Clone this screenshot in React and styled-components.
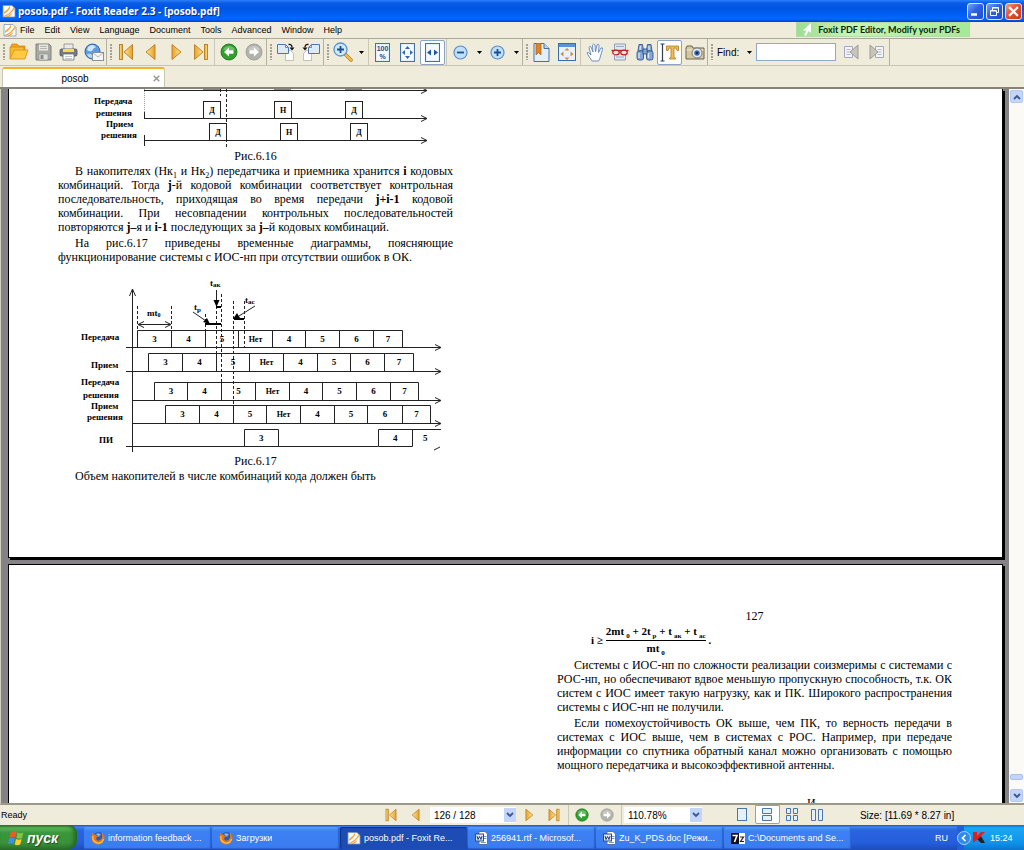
import React from 'react'
import styled, { createGlobalStyle } from 'styled-components';

const GlobalStyle = createGlobalStyle`
  * {
    box-sizing: border-box;
  }

  body {
    margin: 0;
    overflow: hidden;
    font-family: 'Liberation Sans', Arial, sans-serif;
    font-size: 10px;
    color: #000;
  }

  button, input, select {
    margin: 0;
    padding: 0;
    border: 0;
    background: none;
    font: inherit;
    color: inherit;
  }

  svg {
    display: block;
    flex: none;
  }
`

const Window = styled.div`
  display: flex;
  flex-direction: column;
  height: 100vh;
  background: #f0ecdc;
`

/* title bar */

const TitleBar = styled.header`
  display: flex;
  flex: none;
  align-items: center;
  gap: 2px;
  height: 22px;
  padding: 0 2px;
  background: linear-gradient(#2a80f8 0, #0a5ce6 3px, #0055e0 8px, #0062fa 16px, #0068ff 19px, #0040c4 22px);
`

const Title = styled.h1`
  flex: 1;
  margin: 0;
  font-family: 'Open Sans', sans-serif;
  font-size: 10px;
  font-weight: 700;
  color: #fff;
  text-shadow: 1px 1px 0 #0a2f8c;
`

const CaptionButton = styled.button`
  display: flex;
  align-items: center;
  justify-content: center;
  width: 17px;
  height: 17px;
  border: 1px solid #dce6fb;
  border-radius: 3px;
  background: ${props => props.$close
    ? 'linear-gradient(135deg, #f0a088, #e2502c 45%, #c83a14)'
    : 'linear-gradient(135deg, #7ba2f5, #2f62e0 45%, #1c4ccc)'};
`

/* menu */

const MenuBar = styled.nav`
  display: flex;
  flex: none;
  align-items: center;
  height: 16px;
  padding: 0 54px 1px 3px;
  font-size: 9px;
`

const MenuItem = styled.button`
  margin-right: 10px;
`

const DocIconBox = styled.span`
  margin-right: 3px;
`

const Promo = styled.a`
  display: flex;
  align-items: center;
  gap: 6px;
  height: 15px;
  margin-left: auto;
  padding: 0 9px 0 6px;
  border: 1px solid #b2dca6;
  background: linear-gradient(90deg, #9fdc93, #c4f4b6 30%, #a4ea98);
  font-family: Lato, sans-serif;
  font-size: 9px;
  font-weight: 700;
  color: #10240c;
  text-decoration: none;
  white-space: nowrap;
`

/* toolbar */

const Toolbar = styled.div`
  display: flex;
  flex: none;
  height: 28px;
  border-top: 1px solid #aca899;
  border-bottom: 1px solid #c8c5b4;
`

const Group = styled.div`
  display: flex;
  align-items: center;
  border-right: 1px solid #b4b1a2;
`

const Grip = styled.i`
  width: 2px;
  height: 16px;
  margin: 0 1px 0 3px;
  background: repeating-linear-gradient(#a5a294 0 2px, transparent 2px 3px);
`

const Sep = styled.i`
  width: 1px;
  height: 100%;
  margin: 0 1px;
  background: #cbc8b8;
`

const ToolButton = styled.button`
  display: flex;
  align-items: center;
  justify-content: center;
  width: 25px;
  height: 25px;
  border: 1px solid ${props => props.$active ? '#8ba3c4' : 'transparent'};
  border-radius: 2px;
  background: ${props => props.$active ? '#fff' : 'none'};
`

const DropButton = styled.button`
  display: flex;
  align-items: center;
  justify-content: center;
  width: 12px;
  height: 25px;
`

const FindLabel = styled.label`
  margin: 0 4px 0 3px;
`

const FindInput = styled.input`
  width: 80px;
  height: 18px;
  margin: 0 3px 0 1px;
  border: 1px solid #8fa9cc;
  background: #fff;
`

/* tabs */

const TabBar = styled.div`
  display: flex;
  flex: none;
  align-items: flex-end;
  height: 23px;
  padding-left: 2px;
  border-bottom: 2px solid #85827a;
`

const Tab = styled.div`
  display: flex;
  align-items: center;
  width: 163px;
  height: 20px;
  padding: 0 4px;
  border: 1px solid #c9c6b6;
  border-top: 2px solid #f5b227;
  border-bottom: 0;
  border-radius: 3px 3px 0 0;
  background: #fff;
`

const TabName = styled.button`
  flex: 1;
  padding-right: 10px;
`

/* viewer */

const Viewer = styled.main`
  display: flex;
  flex: 1;
  min-height: 0;
  border-bottom: 2px solid #9c998c;
  border-left: 1px solid #d4d0c0;
`

const Pages = styled.div`
  flex: 1;
  padding: 0 6px 0 7px;
  overflow: hidden;
  background: #848284;
`

const Page = styled.article`
  display: grid;
  grid-template-columns: 1fr 1fr;
  gap: 104px;
  padding: ${props => props.$continued ? '0 50px 72px 49px' : '44px 50px 72px 49px'};
  margin-bottom: 6px;
  border: 1px solid #000;
  border-top-width: ${props => props.$continued ? '0' : '1px'};
  box-shadow: 2px 2px 0 #000;
  background: #fff;
  font-family: 'Liberation Serif', 'Times New Roman', serif;
  font-size: 12px;
  line-height: 14px;
`

const Column = styled.section`
  min-width: 0;
`

const Paragraph = styled.p`
  margin: 0 0 2px;
  text-indent: 17px;
  text-align: justify;

  sub {
    font-size: 8px;
    line-height: 0;
  }
`

const Centered = styled.p`
  margin: 0 0 1px;
  text-align: center;
`

const NextHeading = styled.p`
  margin: 24px 0 0;
  padding-left: 250px;
`

const Figure = styled.svg`
  width: 100%;
  max-width: 395px;
  font-family: 'Liberation Serif', 'Times New Roman', serif;
  font-size: 9px;
  font-weight: 700;
`

const Formula = styled.div`
  display: flex;
  align-items: center;
  gap: 3px;
  height: 34px;
  padding: 0 0 3px 34px;
  font-size: 11px;
  font-weight: 700;

  sub {
    margin-left: 2px;
    font-size: 7px;
    line-height: 0;
  }
`

const Fraction = styled.div`
  text-align: center;
`

const Numerator = styled.div`
  height: 17px;
  border-bottom: 1px solid #000;
`

const ScrollBar = styled.div`
  display: flex;
  flex-direction: column;
  justify-content: space-between;
  align-items: center;
  width: 15px;
  padding: 1px 0;
  background: #fbfaf6;
`

const ScrollButton = styled.button`
  display: flex;
  align-items: center;
  justify-content: center;
  width: 13px;
  height: 13px;
  border: 1px solid #b4c8f0;
  border-radius: 2px;
  background: #c4d5fb;
`

const Thumb = styled.div`
  width: 13px;
  height: 6px;
  margin: auto 0 9px;
  border: 1px solid #a8bfee;
  border-radius: 2px;
  background: #c4d5fb;
`

/* status bar */

const StatusBar = styled.footer`
  display: flex;
  flex: none;
  align-items: center;
  height: 20px;
`

const Ready = styled.span`
  width: 37%;
  padding-left: 1px;
  font-size: 9px;
`

const SelectBox = styled.span`
  display: flex;
  align-items: center;
  width: ${props => props.$wide ? '86px' : '78px'};
  height: 16px;
  margin: 0 1px;
  background: #fff;

  select {
    flex: 1;
    min-width: 0;
    padding-left: 4px;
    appearance: none;
  }
`

const SelectArrow = styled.span`
  display: flex;
  align-items: center;
  justify-content: center;
  width: 12px;
  height: 14px;
  background: #c4d5fb;
`

const LayoutButtons = styled.div`
  display: flex;
  height: 100%;
  margin: 0 30px 0 27px;
`

const LayoutButton = styled(ToolButton)`
  height: 19px;
  border-radius: 0 0 2px 2px;
`

/* taskbar */

const Taskbar = styled.div`
  display: flex;
  flex: none;
  height: 25px;
  background: linear-gradient(#1f4fc0 0, #3f83f0 2px, #2a64e0 5px, #245edb 18px, #1d4cb8);
  font-size: 9px;
  color: #fff;
`

const StartButton = styled.button`
  display: flex;
  flex: none;
  align-items: center;
  gap: 3px;
  width: 77px;
  margin-right: 7px;
  padding-left: 8px;
  border-radius: 0 8px 10px 0;
  background: linear-gradient(#2c7a2c 0, #5cb45a 3px, #3a963a 8px, #3a923a 18px, #2a702a);
  box-shadow: inset -3px 0 4px #246424;
  font-size: 14px;
  font-style: italic;
  font-weight: 700;
  text-shadow: 1px 1px 1px #1b4a1b;
`

const Task = styled.button`
  display: flex;
  flex: 0 1 127px;
  align-items: center;
  gap: 3px;
  min-width: 0;
  height: 22px;
  margin: 2px 1px 0 0;
  padding: 0 7px;
  border-radius: 2px;
  background: ${props => props.$active ? '#1c4cb4' : 'linear-gradient(#5c9cfc, #3c81f3 4px, #3a7cf0)'};
  box-shadow: ${props => props.$active ? 'inset 1px 1px 1px #0f3484' : 'inset -1px -1px 1px #2a62d4'};

  span {
    overflow: hidden;
    white-space: nowrap;
  }
`

const Language = styled.span`
  margin: auto 9px auto auto;
`

const Tray = styled.div`
  display: flex;
  align-items: center;
  gap: 2px;
  width: 67px;
  background: linear-gradient(90deg, #245edb 7px, transparent 7px), linear-gradient(#0c6cd0 0, #18a8f4 3px, #0f92ea 18px, #0c74cc);

  time {
    margin-left: 3px;
  }
`

/* icons */

const FoxitIcon = () => (
  <svg width="14" height="14" viewBox="0 0 14 14">
    <path d="M1 1.500h9l3 3v8.500H1z" fill="#f8fbff" stroke="#7a96bc" strokeWidth=".8" />
    <path d="M2 8Q6 6 8 1.500Q9 6 2 10z" fill="#f5a83c" />
    <path d="M13 3Q12 10 4 13Q10 13.500 13 3z" fill="#f08a16" />
    <path d="M12 4Q9 10 2 12.500" stroke="#f5a23c" strokeWidth="1.300" fill="none" />
  </svg>
)

const FolderIcon = () => (
  <svg width="20" height="18" viewBox="0 0 20 18">
    <path d="M2 3l1-2h5l2 2h6v4H2z" fill="#f2a81c" stroke="#cf8010" strokeWidth=".7" />
    <path d="M1 16V4h14v4" fill="#f8bc34" stroke="#cf8010" strokeWidth=".7" />
    <path d="M1 16L5 7h14l-3 9z" fill="#ffca42" stroke="#d98c14" strokeWidth=".8" />
  </svg>
)

const SaveIcon = () => (
  <svg width="17" height="18" viewBox="0 0 17 18">
    <path d="M1 1h13l2 2v14H1z" fill="#a9a9a5" stroke="#80807c" />
    <rect x="4" y="1.5" width="9" height="6" fill="#e8e8e4" />
    <path d="M5 3.5h7M5 5.5h7" stroke="#b4b4b0" />
    <rect x="4" y="11" width="9" height="6" fill="#dededa" stroke="#8a8a86" strokeWidth=".6" />
    <rect x="5.5" y="12" width="3" height="4" fill="#8c8c88" />
  </svg>
)

const PrintIcon = () => (
  <svg width="19" height="18" viewBox="0 0 19 18">
    <path d="M5 1h9v6H5z" fill="#e8eaee" stroke="#8a8a80" strokeWidth=".8" />
    <rect x="1" y="6" width="17" height="7" rx="1.5" fill="#777b80" stroke="#4c5054" strokeWidth=".8" />
    <rect x="4" y="6" width="11" height="3" fill="#f2e23c" />
    <path d="M4 11h11v6H4z" fill="#fafafa" stroke="#6a6e72" strokeWidth=".8" />
    <path d="M6 13.5h7M6 15.5h7" stroke="#b8bcc0" strokeWidth=".8" />
  </svg>
)

const GlobeMailIcon = () => (
  <svg width="20" height="18" viewBox="0 0 20 18">
    <circle cx="8.5" cy="8.5" r="7.5" fill="#5f9be0" stroke="#2c62ac" />
    <path d="M4 4q4-4 8 0q-3 1-4 4q-3 1-5-1z" fill="#cfe6fb" />
    <path d="M3 11q3-1 5 1v3q-4 0-5-4z" fill="#b7d7f6" />
    <rect x="8.5" y="9.5" width="11" height="8" fill="#f6f6f2" stroke="#8a8f98" />
    <path d="M9 10l5 4 5-4" fill="none" stroke="#a0a4ac" strokeWidth=".8" />
  </svg>
)

const NavIcon = ({ kind, size = 18 }) => {
  const back = kind === 'first' || kind === 'prev'
  const bar = kind === 'first' || kind === 'last'
  return (
    <svg width={size} height={size} viewBox="0 0 18 18">
      <defs>
        <linearGradient id={`gold-${kind}`} x1="0" x2="1">
          <stop offset="0" stopColor="#ffe490" />
          <stop offset="1" stopColor="#e8a02c" />
        </linearGradient>
      </defs>
      <g transform={back ? undefined : 'matrix(-1 0 0 1 18 0)'} fill={`url(#gold-${kind})`} stroke="#b87c1c" strokeWidth=".9">
        {bar && <rect x="2.5" y="1.5" width="3" height="15" />}
        <path d={bar ? 'M7 9L15.500 1.500V16.500z' : 'M4 9L13 1.500V16.500z'} />
      </g>
    </svg>
  )
}

const RoundArrow = ({ forward, size = 18 }) => (
  <svg width={size} height={size} viewBox="0 0 18 18">
    <circle cx="9" cy="9" r="8" fill={forward ? '#b3b3ad' : '#2ea12c'} stroke={forward ? '#98988f' : '#1a6a1c'} strokeWidth=".8" />
    <path d="M3 7a6.500 6.500 0 0 1 12 0z" fill="#fff" opacity=".3" />
    <path d="M4 9L9 4.500V7.300H13.500V10.700H9V13.500z" fill="#fff" transform={forward ? 'matrix(-1 0 0 1 18 0)' : undefined} />
  </svg>
)

const RotateIcon = ({ left }) => (
  <svg width="18" height="18" viewBox="0 0 18 18">
    <g transform={left ? 'matrix(-1 0 0 1 18 0)' : undefined}>
      <path d="M8.500 7.500h5l3 3v7h-8z" fill="#fdfdfa" stroke="#b4b4ac" strokeWidth=".8" />
      <path d="M.5 1.500h8l3 3v6H.5z" fill="#dceafa" stroke="#4a78ae" />
      <path d="M8.500 1.500v3h3" fill="none" stroke="#4a78ae" strokeWidth=".8" />
      <path d="M11.500 1.500q3.500-.5 3.500 3" fill="none" stroke="#111" strokeWidth="1.300" />
      <path d="M12.500 4.500h5L15 7.500z" fill="#111" />
    </g>
  </svg>
)

const MagnifierIcon = () => (
  <svg width="20" height="20" viewBox="0 0 20 20">
    <path d="M12 12l6 6" stroke="#b07a20" strokeWidth="3.500" strokeLinecap="round" />
    <path d="M12 12l6 6" stroke="#f4bc50" strokeWidth="2.300" strokeLinecap="round" />
    <circle cx="7.500" cy="7.500" r="6.500" fill="#cfe8fc" stroke="#5a94cc" strokeWidth="1.300" />
    <path d="M4 7.500h7M7.500 4v7" stroke="#1c4e94" strokeWidth="1.800" />
  </svg>
)

const SheetIcon = ({ kind }) => (
  <svg width="17" height="19" viewBox="0 0 17 19">
    <rect x="1.500" y=".5" width="14" height="18" fill="#e2eefb" stroke="#4472a8" />
    <rect x="3" y="2" width="11" height="15" fill="#f4f9ff" />
    {kind === 'actual' && (
      <g fill="#23497c" fontFamily="Liberation Sans, sans-serif" fontSize="7" fontWeight="700" textAnchor="middle">
        <text x="8.500" y="8">100</text>
        <text x="8.500" y="16">%</text>
      </g>
    )}
    {kind === 'page' && (
      <path d="M8.500 3l2.500 3h-5zM8.500 16l2.500-3h-5zM3 9.500l3-2.500v5zM14 9.500l-3-2.500v5z" fill="#3269ac" />
    )}
    {kind === 'width' && <path d="M3 9.500l4-3v6zM14 9.500l-4-3v6z" fill="#1d55a0" />}
  </svg>
)

const ZoomIcon = ({ plus }) => (
  <svg width="15" height="15" viewBox="0 0 15 15">
    <circle cx="7.500" cy="7.500" r="6.500" fill="#bfe0fa" stroke="#5b8fc6" strokeWidth="1.200" />
    <path d={plus ? 'M4 7.500h7M7.500 4v7' : 'M4 7.500h7'} stroke="#1c4e94" strokeWidth="1.800" />
  </svg>
)

const BookmarkIcon = () => (
  <svg width="17" height="19" viewBox="0 0 17 19">
    <path d="M1 .5h10l5 5v13H1z" fill="#e4effc" stroke="#4472a8" />
    <path d="M11 .5v5h5" fill="#b9d2f0" stroke="#4472a8" />
    <path d="M3 0h5v12L5.500 9.500 3 12z" fill="#e08420" stroke="#a85a10" strokeWidth=".7" />
  </svg>
)

const FullScreenIcon = () => (
  <svg width="18" height="18" viewBox="0 0 18 18">
    <rect x=".5" y=".5" width="17" height="17" fill="#e8f1fc" stroke="#3a6cac" />
    <path d="M1 2.500h16" stroke="#5d93d6" strokeWidth="3" />
    <path d="M9 5l2.500 2.500h-5zM9 17l2.500-2.500h-5zM2.500 11l3-2.500v5zM15.500 11l-3-2.500v5z" fill="#cc9030" />
  </svg>
)

const HandIcon = () => (
  <svg width="18" height="19" viewBox="0 0 18 19">
    <path d="M6 18L1.500 11Q.5 9 2.500 9.500L5 12L3 4.500Q3.500 2.500 5 4L7 9L6.500 2Q7.500 0 9 2L9.500 9L11 2Q12.500 0 13 2.500L12.500 9.500L15 5Q17 4 16.500 6.500L14.500 13Q14 16 12.500 18z" fill="#fff" stroke="#5f84b8" strokeWidth=".9" strokeLinejoin="round" />
  </svg>
)

const PrintPreviewIcon = () => (
  <svg width="18" height="18" viewBox="0 0 18 18">
    <path d="M3.500 1h11v16h-11z" fill="#dfe8f5" stroke="#8595ae" strokeWidth=".9" />
    <path d="M5 3.500h8M5 14h8" stroke="#9aa8bc" />
    <path d="M.5 7.500h17" stroke="#b82020" strokeWidth="1.300" />
    <ellipse cx="5" cy="9.500" rx="3.300" ry="2.300" fill="#fbe6e6" stroke="#b82020" strokeWidth="1.200" />
    <ellipse cx="13" cy="9.500" rx="3.300" ry="2.300" fill="#fbe6e6" stroke="#b82020" strokeWidth="1.200" />
  </svg>
)

const BinocularsIcon = () => (
  <svg width="18" height="18" viewBox="0 0 18 18">
    <g fill="#86a8d8" stroke="#34588c" strokeWidth=".9">
      <path d="M3 1.500h3.500l1 6.500H2z" />
      <path d="M11.500 1.500H15L16 8h-5.500z" />
      <rect x="1" y="8" width="6.500" height="9" rx="2" />
      <rect x="10.500" y="8" width="6.500" height="9" rx="2" />
      <rect x="7" y="6" width="4" height="5" />
    </g>
    <path d="M3 10v5M12.500 10v5M4.500 3l-.5 4M13 3v4" stroke="#d8e6f8" strokeWidth="1.300" />
  </svg>
)

const TextToolIcon = () => (
  <svg width="19" height="19" viewBox="0 0 19 19">
    <path d="M.5 1h4M.5 18h4M2.500 1v17" stroke="#2c3c54" strokeWidth="1.200" fill="none" />
    <path d="M6.500 3h12v4.500h-1.500L16 5h-2v9.500l1.500.5v1h-6v-1l1.500-.5V5H9L8 7.500H6.500z" fill="#f0bc58" stroke="#b07a1c" strokeWidth=".8" />
  </svg>
)

const CameraIcon = () => (
  <svg width="20" height="17" viewBox="0 0 20 17">
    <path d="M1 4l1-2h5l1 2h11v11H1z" fill="#d4c8a4" stroke="#6e6448" />
    <path d="M1.500 6h17" stroke="#f4ecd0" />
    <circle cx="12" cy="9" r="5" fill="#ececec" stroke="#77787c" />
    <circle cx="12" cy="9" r="2.800" fill="#3c6cb4" />
    <circle cx="12" cy="9" r="1.200" fill="#12284c" />
  </svg>
)

const FindPageIcon = ({ next }) => (
  <svg width="15" height="16" viewBox="0 0 15 16">
    <g transform={next ? 'matrix(-1 0 0 1 15 0)' : undefined}>
      <path d="M.5 2.500h8v11h-8z" fill="#f4f4f6" stroke="#a2a8c2" />
      <path d="M2.500 5.500h4M2.500 8h4M2.500 10.500h4" stroke="#b4b8cc" />
      <path d="M6 8L14 1v14z" fill="#c8c6bc" stroke="#96948c" strokeWidth=".9" />
    </g>
  </svg>
)

const DownTriangle = () => (
  <svg width="5" height="3" viewBox="0 0 5 3"><path d="M0 0h5L2.500 3z" fill="#000" /></svg>
)

const Chevron = ({ up }) => (
  <svg width="8" height="6" viewBox="0 0 8 6">
    <path d={up ? 'M1 5l3-3 3 3' : 'M1 1l3 3 3-3'} fill="none" stroke="#3d5590" strokeWidth="1.800" />
  </svg>
)

const LayoutIcon = ({ kind }) => (
  <svg width="12" height="13" viewBox="0 0 12 13" fill="#e6f0fb" stroke="#4a76aa">
    {kind === 'single' && <rect x="1.500" y=".5" width="9" height="12" />}
    {kind === 'continuous' && <path d="M1.500 .5h9v5h-9zM1.500 7.500h9v5h-9z" />}
    {kind === 'facing' && <path d="M.5 1.500h4v11h-4zM7.500 1.500h4v11h-4z" />}
    {kind === 'grid' && <path d="M.5 .5h4v5h-4zM7.500 .5h4v5h-4zM.5 7.500h4v5h-4zM7.500 7.500h4v5h-4z" />}
  </svg>
)

const CloseIcon = ({ color, size }) => (
  <svg width={size} height={size} viewBox="0 0 10 10">
    <path d="M1 1l8 8M9 1L1 9" stroke={color} strokeWidth="2" />
  </svg>
)

const FirefoxIcon = () => (
  <svg width="14" height="14" viewBox="0 0 14 14">
    <circle cx="7.500" cy="6.500" r="5.500" fill="#2f5cb0" />
    <path d="M5 3q3-2 5 1q-2 0-2 2z" fill="#8cbcf0" />
    <path d="M1 2Q3 4 4 3.500Q6 5 7 5.500Q5 6 5 8Q7 11 10 8.500Q12 6 10.500 1.500Q14 4 13.500 8Q12 13.500 7 13.500Q1 13 .5 7.500z" fill="#ee7418" />
    <path d="M2 5q-1 5 4 7q5 1 6.500-4" fill="none" stroke="#ffc244" strokeWidth="1.200" />
  </svg>
)

const WordIcon = () => (
  <svg width="13" height="14" viewBox="0 0 13 14">
    <path d="M4 .5h6l2.500 2.500v10.500H4z" fill="#fff" stroke="#5472a8" />
    <path d="M9 5.500h2.500M9 7.500h2.500M6 11.500h5" stroke="#7c98c8" />
    <rect x=".5" y="3" width="8" height="7" fill="#dfe8f8" stroke="#2a4a8c" />
    <path d="M2 5l1 3.500 1.500-3 1.500 3L7 5" fill="none" stroke="#1c3c84" />
  </svg>
)

const SevenZipIcon = () => (
  <svg width="14" height="11" viewBox="0 0 14 11">
    <rect width="14" height="11" fill="#fff" />
    <rect width="8" height="11" fill="#111" />
    <path d="M1.500 2.500H6L3.500 9" fill="none" stroke="#fff" strokeWidth="1.600" />
    <path d="M9 4h3.500L9.500 8.500H13" fill="none" stroke="#222" strokeWidth="1.200" />
  </svg>
)

const WindowsFlag = () => (
  <svg width="16" height="16" viewBox="0 0 16 16">
    <path d="M3 2q3-2 5.500 0L7 7.500Q4.500 6 1.500 7.500z" fill="#f05a28" />
    <path d="M9.500 2.500q3 1.500 6 0L14 8q-3 1.500-5.500 0z" fill="#86c440" />
    <path d="M1.200 8.500q3-1.500 5.500 0L5.200 14Q3 12.500 0 14z" fill="#3f8ff0" />
    <path d="M8 9q2.500 1.500 5.700 0l-1.500 5.500q-3 1.500-5.500 0z" fill="#fccb2c" />
  </svg>
)

const TrayArrow = () => (
  <svg width="14" height="14" viewBox="0 0 14 14">
    <circle cx="7" cy="7" r="6.500" fill="#2f8cec" stroke="#a4d2fa" />
    <path d="M8.500 4L5.500 7l3 3" fill="none" stroke="#fff" strokeWidth="1.700" />
  </svg>
)

const KasperskyIcon = () => (
  <svg width="12" height="13" viewBox="0 0 12 13">
    <path d="M4 8l4-3 4 7H8z" fill="#222" />
    <path d="M0 1h4v4l4-4h4L5 8l-5 4z" fill="#e41c1c" />
  </svg>
)

/* figures */

const Arrow = ({ x1, x2, y }) => (
  <path d={`M${x1} ${y}H${x2}M${x2 - 6} ${y - 3}L${x2} ${y}L${x2 - 6} ${y + 3}`} fill="none" />
)

const decisionRows = [
  { y: 118.5, xs: [203.5, 274.5, 345.5] },
  { y: 140.5, xs: [209.5, 280.5, 350.5] },
]

const decisions = ['Д', 'Н', 'Д']

const Figure616 = () => (
  <Figure viewBox="58 89 395 60">
    <g stroke="#222" fill="none">
      <path d="M144.500 89v23" stroke="#999" strokeDasharray="1 1" />
      <path d="M144.500 112v6M144.500 135v11" />
      <path d="M226.500 89v58" strokeDasharray="3 2" />
      <path d="M220.500 89v7" strokeDasharray="3 2" />
      <Arrow x1={144} x2={427} y={90.5} />
      <path d="M203 89.500h17M274 89.500h17M345 89.500h17" stroke="#888" />
      {decisionRows.map(row => (
        <g key={row.y}>
          <Arrow x1={144} x2={427} y={row.y} />
          {row.xs.map(x => <rect key={x} x={x} y={row.y - 17} width="17" height="17" fill="#fff" />)}
        </g>
      ))}
    </g>
    {decisionRows.map(row => row.xs.map((x, i) => (
      <text key={x} x={x + 8.5} y={row.y - 6} fontSize="8" textAnchor="middle">{decisions[i]}</text>
    )))}
    <text x="94" y="104">Передача</text>
    <text x="96" y="116">решения</text>
    <text x="106" y="127">Прием</text>
    <text x="101" y="138">решения</text>
  </Figure>
)

const timeline = [
  { top: 330.5, base: 347.5, start: 126, xs: [137.5, 171.5, 205.5, 238.5, 272.5, 305.5, 339.5, 373.5, 402.5] },
  { top: 353.5, base: 371.5, start: 126, xs: [148.5, 182.5, 216.5, 249.5, 283.5, 317.5, 350.5, 384.5, 413.5] },
  { top: 382.5, base: 400.5, start: 132, xs: [154.5, 187.5, 221.5, 255.5, 289.5, 322.5, 356.5, 390.5, 418.5] },
  { top: 405.5, base: 423.5, start: 132, xs: [165.5, 199.5, 233.5, 266.5, 300.5, 334.5, 367.5, 402.5, 430.5] },
]

const frames = ['3', '4', '5', 'Нет', '4', '5', '6', '7']

const Figure617 = () => (
  <Figure viewBox="58 266 395 188">
    <g stroke="#222" fill="none">
      <path d="M132.500 452V289M129.500 296L132.500 289L135.500 296" />
      {timeline.map(row => (
        <g key={row.base}>
          <Arrow x1={row.start} x2={441} y={row.base} />
          <path d={`M${row.xs[0]} ${row.top}H${row.xs[8]}` + row.xs.map(x => `M${x} ${row.top}V${row.base}`).join('')} />
        </g>
      ))}
      <path d="M126 446.500H378M244.500 446.500v-17h34v17M378.500 446.500v-17H441M378.500 446.500h34v-17M434 450L440 447" />
      <path d="M137.500 306v24M171.500 306v24M205.500 314v16M216.500 306v65M221.500 294v106M233.500 301v122M244.500 301v46" strokeDasharray="3 2" />
      <path d="M138 324.500H170M144 321.500L138 324.500L144 327.500M165 321.500L171 324.500L165 327.500" />
      <path d="M193 312L206 321M216.500 290V301M255 306L239 316" />
      <path d="M205 324H221M216 307H221M234 319H244" stroke="#000" strokeWidth="2" />
    </g>
    <path d="M210 324l-7-2 4-4zM216.500 307l-3-7h6zM233 319l4-6 3 5z" />
    <text x="147" y="316">mt<tspan fontSize="6" dy="1">0</tspan></text>
    <text x="194" y="310">t<tspan fontSize="7" dy="2">р</tspan></text>
    <text x="210" y="286">t<tspan fontSize="7" dy="1">ак</tspan></text>
    <text x="245" y="303">t<tspan fontSize="7" dy="1">ас</tspan></text>
    {timeline.map(row => frames.map((name, i) => (
      <text
        key={`${row.base}-${i}`}
        x={(row.xs[i] + row.xs[i + 1]) / 2}
        y={row.top + 11}
        fontSize={name === 'Нет' ? 8 : 9}
        textAnchor="middle"
      >
        {name}
      </text>
    )))}
    <text x="259" y="441">3</text>
    <text x="393" y="441">4</text>
    <text x="423" y="441">5</text>
    <text x="81" y="340">Передача</text>
    <text x="91" y="368">Прием</text>
    <text x="81" y="385">Передача</text>
    <text x="83" y="398">решения</text>
    <text x="91" y="409">Прием</text>
    <text x="87" y="420">решения</text>
    <text x="99" y="443">ПИ</text>
  </Figure>
)

const menu = ['File', 'Edit', 'View', 'Language', 'Document', 'Tools', 'Advanced', 'Window', 'Help']

const tasks = [
  { name: 'information feedback ...', icon: <FirefoxIcon /> },
  { name: 'Загрузки', icon: <FirefoxIcon /> },
  { name: 'posob.pdf - Foxit Re...', icon: <FoxitIcon />, active: true },
  { name: '256941.rtf - Microsof...', icon: <WordIcon /> },
  { name: 'Zu_K_PDS.doc [Режи...', icon: <WordIcon /> },
  { name: 'C:\\Documents and Se...', icon: <SevenZipIcon /> },
]

const Tool = ({ label, active, children }) => (
  <ToolButton aria-label={label} $active={active}>{children}</ToolButton>
)

const Drop = ({ label }) => (
  <DropButton aria-label={label}><DownTriangle /></DropButton>
)

const MainToolbar = () => (
  <Toolbar>
    <Group>
      <Grip />
      <Tool label="Open"><FolderIcon /></Tool>
      <Tool label="Save"><SaveIcon /></Tool>
      <Tool label="Print"><PrintIcon /></Tool>
      <Tool label="Email"><GlobeMailIcon /></Tool>
    </Group>
    <Group>
      <Grip />
      <Tool label="First page"><NavIcon kind="first" /></Tool>
      <Tool label="Previous page"><NavIcon kind="prev" /></Tool>
      <Tool label="Next page"><NavIcon kind="next" /></Tool>
      <Tool label="Last page"><NavIcon kind="last" /></Tool>
      <Sep />
      <Tool label="Previous view"><RoundArrow /></Tool>
      <Tool label="Next view"><RoundArrow forward /></Tool>
    </Group>
    <Group>
      <Grip />
      <Tool label="Rotate right"><RotateIcon /></Tool>
      <Tool label="Rotate left"><RotateIcon left /></Tool>
    </Group>
    <Group>
      <Grip />
      <Tool label="Zoom tool"><MagnifierIcon /></Tool>
      <Drop label="Zoom tool options" />
      <Sep />
      <Tool label="Actual size"><SheetIcon kind="actual" /></Tool>
      <Tool label="Fit page"><SheetIcon kind="page" /></Tool>
      <Tool label="Fit width" active><SheetIcon kind="width" /></Tool>
      <Sep />
      <Tool label="Zoom out"><ZoomIcon /></Tool>
      <Drop label="Zoom out options" />
      <Tool label="Zoom in"><ZoomIcon plus /></Tool>
      <Drop label="Zoom in options" />
    </Group>
    <Group>
      <Grip />
      <Tool label="Bookmarks"><BookmarkIcon /></Tool>
      <Tool label="Full screen"><FullScreenIcon /></Tool>
      <Sep />
      <Tool label="Hand tool"><HandIcon /></Tool>
      <Tool label="Text viewer"><PrintPreviewIcon /></Tool>
      <Tool label="Find text"><BinocularsIcon /></Tool>
      <Tool label="Select text" active><TextToolIcon /></Tool>
      <Tool label="Snapshot"><CameraIcon /></Tool>
    </Group>
    <Group>
      <Grip />
      <FindLabel htmlFor="find">Find:</FindLabel>
      <Drop label="Find options" />
      <FindInput id="find" />
      <Tool label="Find previous"><FindPageIcon /></Tool>
      <Tool label="Find next"><FindPageIcon next /></Tool>
    </Group>
  </Toolbar>
)

const Document = () => (
  <Pages>
    <Page $continued>
      <Column>
        <Figure616 />
        <Centered>Рис.6.16</Centered>
        <Paragraph>
          В накопителях (Нк<sub>1</sub> и Нк<sub>2</sub>) передатчика и приемника хранится <b>i</b> кодовых
          комбинаций. Тогда <b>j</b>-й кодовой комбинации соответствует контрольная последовательность,
          приходящая во время передачи <b>j+i-1</b> кодовой комбинации. При несовпадении контрольных
          последовательностей повторяются <b>j–</b>я и <b>i-1</b> последующих за <b>j–</b>й кодовых комбинаций.
        </Paragraph>
        <Paragraph>
          На рис.6.17 приведены временные диаграммы, поясняющие функционирование системы с ИОС-нп при
          отсутствии ошибок в ОК.
        </Paragraph>
        <Figure617 />
        <Centered>Рис.6.17</Centered>
        <Paragraph>Объем накопителей в числе комбинаций кода должен быть</Paragraph>
      </Column>
    </Page>
    <Page>
      <Column />
      <Column>
        <Centered>127</Centered>
        <Formula>
          <span>i ≥</span>
          <Fraction>
            <Numerator>2mt<sub>0</sub> + 2t<sub>р</sub> + t<sub>ак</sub> + t<sub>ас</sub></Numerator>
            <div>mt<sub>0</sub></div>
          </Fraction>
          <span>.</span>
        </Formula>
        <Paragraph>
          Системы с ИОС-нп по сложности реализации соизмеримы с системами с РОС-нп, но обеспечивают вдвое
          меньшую пропускную способность, т.к. ОК систем с ИОС имеет такую нагрузку, как и ПК. Широкого
          распространения системы с ИОС-нп не получили.
        </Paragraph>
        <Paragraph>
          Если помехоустойчивость ОК выше, чем ПК, то верность передачи в системах с ИОС выше, чем в системах
          с РОС. Например, при передаче информации со спутника обратный канал можно организовать с помощью
          мощного передатчика и высокоэффективной антенны.
        </Paragraph>
        <NextHeading>И</NextHeading>
      </Column>
    </Page>
  </Pages>
)

export default function App() {
  return (
    <Window>
      <GlobalStyle />
      <TitleBar>
        <FoxitIcon />
        <Title>posob.pdf - Foxit Reader 2.3 - [posob.pdf]</Title>
        <CaptionButton aria-label="Minimize">
          <svg width="11" height="11" viewBox="0 0 11 11"><path d="M1 8.500h6" stroke="#fff" strokeWidth="2.500" /></svg>
        </CaptionButton>
        <CaptionButton aria-label="Restore">
          <svg width="11" height="11" viewBox="0 0 11 11" fill="none" stroke="#fff">
            <path d="M3.500 4V1.500h6v5H7.500M3.500 2h6M1.500 4.500h6v5h-6zM1.500 5h6" />
          </svg>
        </CaptionButton>
        <CaptionButton aria-label="Close" $close><CloseIcon color="#fff" size="11" /></CaptionButton>
      </TitleBar>
      <MenuBar>
        <DocIconBox><FoxitIcon /></DocIconBox>
        {menu.map(item => <MenuItem key={item}>{item}</MenuItem>)}
        <Promo href="#editor">
          <svg width="9" height="13" viewBox="0 0 9 13"><path d="M8 0v10L5.500 8 3 13 1 12l2.500-4.500H0z" fill="#fff" /></svg>
          Foxit PDF Editor, Modify your PDFs
        </Promo>
      </MenuBar>
      <MainToolbar />
      <TabBar>
        <Tab>
          <TabName>posob</TabName>
          <button aria-label="Close tab"><CloseIcon color="#98968c" size="7" /></button>
        </Tab>
      </TabBar>
      <Viewer>
        <Document />
        <ScrollBar>
          <ScrollButton aria-label="Scroll up"><Chevron up /></ScrollButton>
          <Thumb />
          <ScrollButton aria-label="Scroll down"><Chevron /></ScrollButton>
        </ScrollBar>
      </Viewer>
      <StatusBar>
        <Ready>Ready</Ready>
        <Tool label="First page"><NavIcon kind="first" size={14} /></Tool>
        <Tool label="Previous page"><NavIcon kind="prev" size={14} /></Tool>
        <SelectBox $wide>
          <select aria-label="Page" defaultValue="126"><option value="126">126 / 128</option></select>
          <SelectArrow><Chevron /></SelectArrow>
        </SelectBox>
        <Tool label="Next page"><NavIcon kind="next" size={14} /></Tool>
        <Tool label="Last page"><NavIcon kind="last" size={14} /></Tool>
        <Sep />
        <Tool label="Previous view"><RoundArrow size={14} /></Tool>
        <Tool label="Next view"><RoundArrow forward size={14} /></Tool>
        <Sep />
        <SelectBox>
          <select aria-label="Zoom" defaultValue="110"><option value="110">110.78%</option></select>
          <SelectArrow><Chevron /></SelectArrow>
        </SelectBox>
        <LayoutButtons>
          <LayoutButton aria-label="Single page"><LayoutIcon kind="single" /></LayoutButton>
          <LayoutButton aria-label="Continuous" $active><LayoutIcon kind="continuous" /></LayoutButton>
          <LayoutButton aria-label="Continuous facing"><LayoutIcon kind="grid" /></LayoutButton>
          <LayoutButton aria-label="Facing"><LayoutIcon kind="facing" /></LayoutButton>
        </LayoutButtons>
        <span>Size: [11.69 * 8.27 in]</span>
      </StatusBar>
      <Taskbar>
        <StartButton><WindowsFlag />пуск</StartButton>
        {tasks.map(task => (
          <Task key={task.name} $active={task.active}>{task.icon}<span>{task.name}</span></Task>
        ))}
        <Language>RU</Language>
        <Tray>
          <TrayArrow />
          <KasperskyIcon />
          <time>15:24</time>
        </Tray>
      </Taskbar>
    </Window>
  );
}
